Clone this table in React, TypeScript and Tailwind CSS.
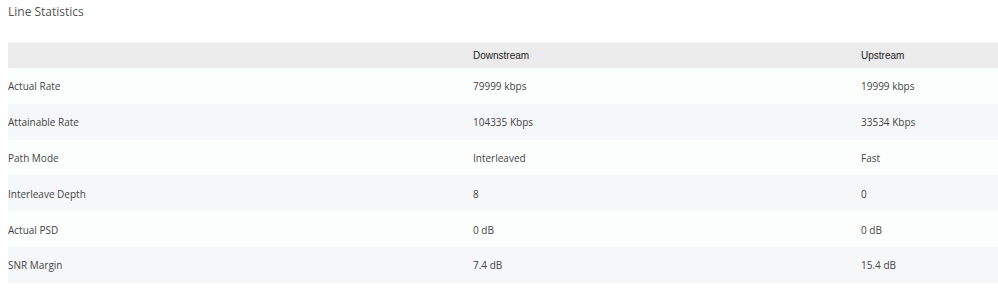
const rows = [
  ["Actual Rate", "79999 kbps", "19999 kbps"],
  ["Attainable Rate", "104335 Kbps", "33534 Kbps"],
  ["Path Mode", "Interleaved", "Fast"],
  ["Interleave Depth", "8", "0"],
  ["Actual PSD", "0 dB", "0 dB"],
  ["SNR Margin", "7.4 dB", "15.4 dB"],
];

export default function App() {
  return (
    <div className="w-[998px] h-[299px] bg-white pl-2 pt-[3px] font-['Open_Sans',sans-serif] text-[#444]">
      <h2 className="text-[12px] leading-[18px] text-[#555]">Line Statistics</h2>

      <div className="mt-[21px]">
        {/* header */}
        <div className="grid grid-cols-[465px_388px_1fr] h-[26px] items-center bg-[#ececec] border-t border-[#f4f4f4] font-['Liberation_Sans',Arial,sans-serif] text-[10px] text-[#222]">
          <div />
          <div>Downstream</div>
          <div>Upstream</div>
        </div>

        {rows.map((r, i) => (
          <div
            key={r[0]}
            className={`grid grid-cols-[465px_388px_1fr] h-[35.8px] items-center pt-[2px] text-[10px] ${
              i % 2 === 0 ? "bg-[#fcfefe]" : "bg-[#f5f7f9]"
            }`}
          >
            <div>{r[0]}</div>
            <div>{r[1]}</div>
            <div>{r[2]}</div>
          </div>
        ))}
      </div>
    </div>
  );
}
